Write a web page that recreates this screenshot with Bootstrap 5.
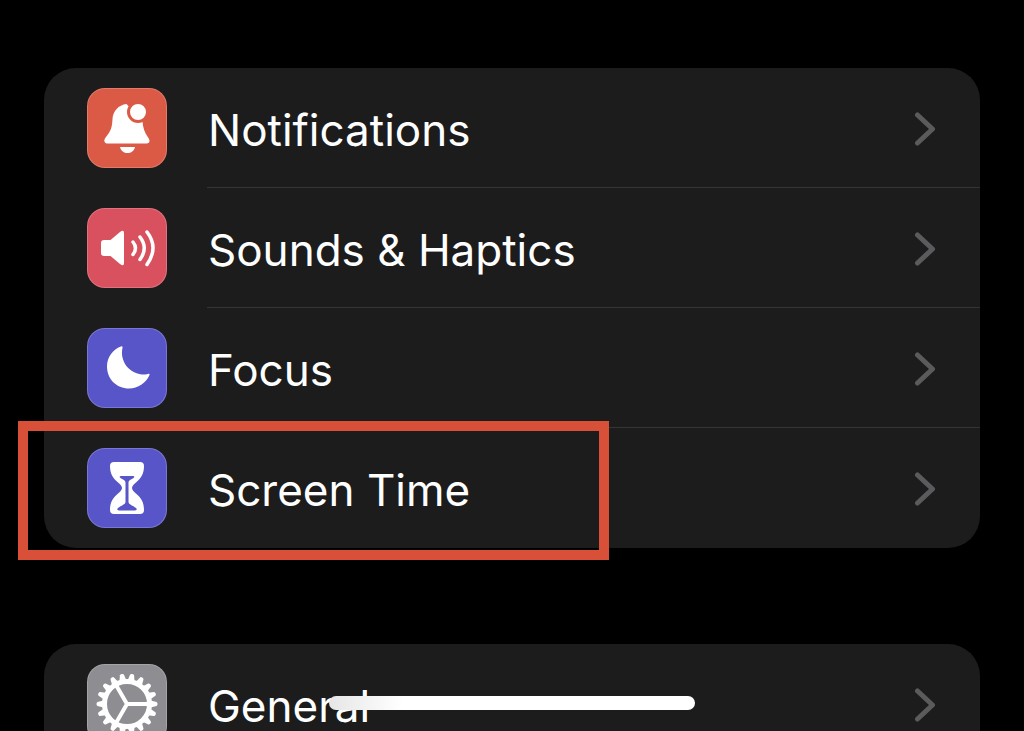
<!DOCTYPE html>
<html lang="en" data-bs-theme="dark">
<head>
<meta charset="utf-8">
<meta name="viewport" content="width=device-width, initial-scale=1">
<title>Settings</title>
<link href="https://cdn.jsdelivr.net/npm/bootstrap@5.3.0/dist/css/bootstrap.min.css" rel="stylesheet">
<style>
  body { background: #000; font-family: Inter, "Liberation Sans", sans-serif; }
  .screen { height: 100vh; padding: 68px 44px 0; gap: 96px; }
  .settings-group { background: #1c1c1c; border-radius: 32px; }
  .settings-row { height: 120px; padding-left: 43px; gap: 40px; color: #fff; }
  .settings-row:hover { color: #fff; }
  .tile { width: 80px; height: 80px; border-radius: 18px; border: 1px solid rgba(255,255,255,.2); }
  .tile svg { width: 78px; height: 78px; display: block; }
  .tile-red { background: #da5a46; }
  .tile-pink { background: #d9515e; }
  .tile-indigo { background: #5855c8; }
  .tile-gray { background: #8e8d92; }
  .row-body { border-bottom: 1px solid #353536; padding: 4px 44px 0 1px; font-size: 44px; line-height: 56px; }
  .settings-group li:last-child .row-body { border-bottom-color: transparent; }
  .chevron { width: 22px; height: 36px; margin-bottom: 2px; }
  .callout { position: absolute; left: -26px; top: -7px; width: 591px; height: 139px; border: 10px solid #d75037; pointer-events: none; }
  .home-bar { position: fixed; left: 50%; bottom: 21px; width: 366px; height: 14px; margin-left: -183px; border-radius: 7px; background: linear-gradient(90deg, #e6e6e6, #fff 20%); }
</style>
</head>
<body>
<svg class="d-none" aria-hidden="true">
  <symbol id="chevron" viewBox="0 0 22 36"><path d="M3.500 4 18.500 18 3.500 32" fill="none" stroke="#5b5b5e" stroke-width="5" stroke-linecap="round" stroke-linejoin="round"/></symbol>
</svg>
<main class="screen d-flex flex-column overflow-hidden">
  <ul class="settings-group list-unstyled mb-0 flex-shrink-0">
    <li>
      <a href="#notifications" class="settings-row d-flex align-items-center text-decoration-none">
        <span class="tile tile-red flex-shrink-0"><svg viewBox="0 0 78 78" fill="#fff" aria-hidden="true">
          <path d="M38.500 15c-8 1-13.500 7-14 15-.4 8-1.500 12-6.500 18-1.500 2-2 3-1.500 4.500s1.500 2 3 2h39c2 0 3-1 3-2.500s-1-3-2-4.500c-3-4-4.500-9-5-15Z"/>
          <path d="M32 58h15c-1 4-4 6-7.500 6s-6.500-2-7.500-6Z"/>
          <circle cx="50" cy="23" r="9.500" fill="#fff" stroke="#da5a46" stroke-width="3"/>
        </svg></span>
        <span class="row-body d-flex align-items-center justify-content-between flex-grow-1 h-100">Notifications<svg class="chevron" aria-hidden="true"><use href="#chevron"/></svg></span>
      </a>
    </li>
    <li>
      <a href="#sounds" class="settings-row d-flex align-items-center text-decoration-none">
        <span class="tile tile-pink flex-shrink-0"><svg viewBox="0 0 78 78" fill="#fff" aria-hidden="true">
          <path d="M16 31h6.500L32 23q4-3 4 1v30q0 4-4 1l-9.500-8H16q-3 0-3-3V34q0-3 3-3Z"/>
          <g fill="none" stroke="#fff" stroke-width="3.500" stroke-linecap="round"><path d="M45 33q5 6 0 12.500"/><path d="M52 28q8.500 11 0 22.500"/><path d="M59 23q12 15.500 0 32.500"/></g>
        </svg></span>
        <span class="row-body d-flex align-items-center justify-content-between flex-grow-1 h-100">Sounds &amp; Haptics<svg class="chevron" aria-hidden="true"><use href="#chevron"/></svg></span>
      </a>
    </li>
    <li>
      <a href="#focus" class="settings-row d-flex align-items-center text-decoration-none">
        <span class="tile tile-indigo flex-shrink-0"><svg viewBox="0 0 78 78" fill="#fff" aria-hidden="true">
          <path d="M33.500 17.200q1.500-.2 1 1.500C31.500 32 41 45.500 57 45.500q2 0 3.500-.8 1.500-.2 1 1.300C58 54 50 59.500 41 59.500 28.500 59.500 19 50 19 37.500c0-9.500 6-17.500 14.500-20.300Z"/>
        </svg></span>
        <span class="row-body d-flex align-items-center justify-content-between flex-grow-1 h-100">Focus<svg class="chevron" aria-hidden="true"><use href="#chevron"/></svg></span>
      </a>
    </li>
    <li class="position-relative">
      <a href="#screen-time" class="settings-row d-flex align-items-center text-decoration-none">
        <span class="tile tile-indigo flex-shrink-0"><svg viewBox="0 0 78 78" aria-hidden="true">
          <path fill="#fff" d="M26 13h26q4 0 4 4c0 8-3 12-7.500 16q-4.500 3.500-4.500 6t4.500 6C53 49 56 53 56 61q0 4-4 4H26q-4 0-4-4c0-8 3-12 7.500-16q4.500-3.500 4.500-6t-4.500-6C25 29 22 25 22 17q0-4 4-4Z"/>
          <path fill="#5855c8" d="M33 27h12q2 0 1 1.500c-2 2-5.500 2.500-5.500 5v19.500c0 2.500 4.500 3.500 7.500 6 1.500 1.500.5 2.500-1 2.500H31c-1.500 0-2.500-1-1-2.500 3-2.500 7.500-3.500 7.500-6V33.500c0-2.500-3.500-3-5.500-5q-1-1.500 1-1.500Z"/>
        </svg></span>
        <span class="row-body d-flex align-items-center justify-content-between flex-grow-1 h-100">Screen Time<svg class="chevron" aria-hidden="true"><use href="#chevron"/></svg></span>
      </a>
      <div class="callout"></div>
    </li>
  </ul>
  <ul class="settings-group list-unstyled mb-0 flex-shrink-0">
    <li>
      <a href="#general" class="settings-row d-flex align-items-center text-decoration-none">
        <span class="tile tile-gray flex-shrink-0"><svg viewBox="0 0 78 78" fill="none" stroke="#fff" aria-hidden="true">
          <circle cx="39" cy="39" r="22.500" stroke-width="5"/>
          <g fill="#fff" stroke="none">
            <g id="teeth">
              <path id="tooth" d="M15.500 35.500 9.500 37q-1 .3-1 2t1 2l6 1.500Z"/>
              <use href="#tooth" transform="rotate(20 39 39)"/>
              <use href="#tooth" transform="rotate(40 39 39)"/>
            </g>
            <use href="#teeth" transform="rotate(60 39 39)"/>
            <use href="#teeth" transform="rotate(120 39 39)"/>
            <use href="#teeth" transform="rotate(180 39 39)"/>
            <use href="#teeth" transform="rotate(240 39 39)"/>
            <use href="#teeth" transform="rotate(300 39 39)"/>
          </g>
          <path d="M39 39h22M39 39 28 20M39 39 28 58" stroke-width="4"/>
        </svg></span>
        <span class="row-body d-flex align-items-center justify-content-between flex-grow-1 h-100">General<svg class="chevron" aria-hidden="true"><use href="#chevron"/></svg></span>
      </a>
    </li>
  </ul>
</main>
<div class="home-bar"></div>
<script src="https://cdn.jsdelivr.net/npm/bootstrap@5.3.0/dist/js/bootstrap.bundle.min.js"></script>
</body>
</html>
